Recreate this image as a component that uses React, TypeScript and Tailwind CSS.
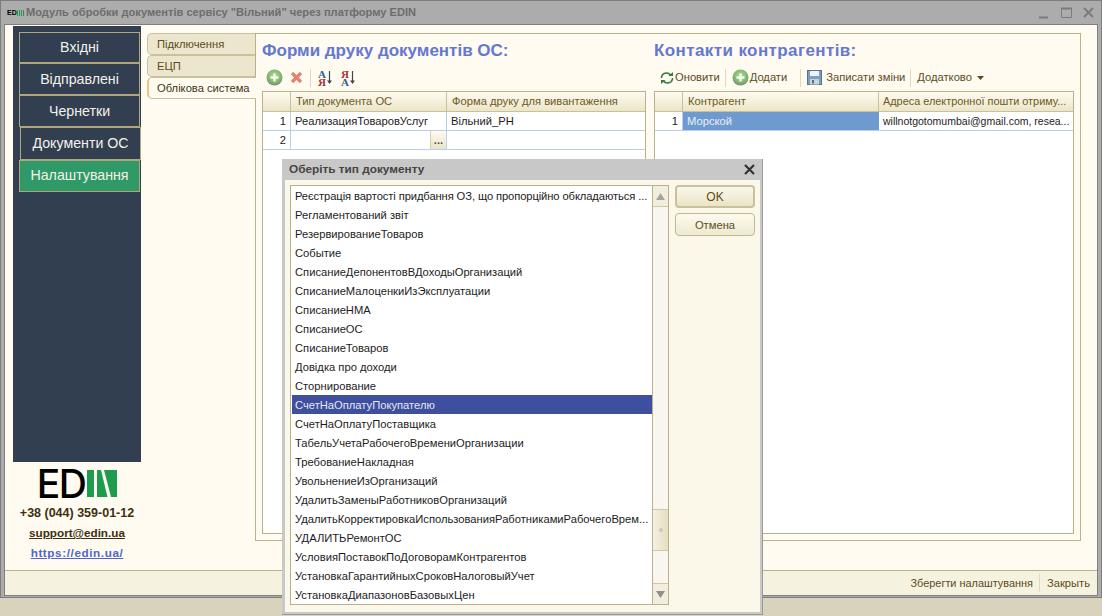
import React from 'react'

const menu = [
  { label: 'Вхідні', cls: 'bg-[#323f50] h-[31px] ml-[6px] w-[121px]' },
  { label: 'Відправлені', cls: 'bg-[#323f50] h-[32px] pt-px ml-[6px] w-[121px]' },
  { label: 'Чернетки', cls: 'bg-[#323f50] h-[32px] pt-px ml-[6px] w-[121px]' },
  { label: 'Документи ОС', cls: 'bg-[#323f50] h-[33px] ml-[7px] w-[121px]' },
  { label: 'Налаштування', cls: 'bg-[#2f9967] h-[32px] ml-[6px] w-[121px]' },
]

const docs = [
  'Реєстрація вартості придбання ОЗ, що пропорційно обкладаються ...',
  'Регламентований звіт',
  'РезервированиеТоваров',
  'Событие',
  'СписаниеДепонентовВДоходыОрганизаций',
  'СписаниеМалоценкиИзЭксплуатации',
  'СписаниеНМА',
  'СписаниеОС',
  'СписаниеТоваров',
  'Довідка про доходи',
  'Сторнирование',
  'СчетНаОплатуПокупателю',
  'СчетНаОплатуПоставщика',
  'ТабельУчетаРабочегоВремениОрганизации',
  'ТребованиеНакладная',
  'УвольнениеИзОрганизаций',
  'УдалитьЗаменыРаботниковОрганизаций',
  'УдалитьКорректировкаИспользованияРаботникамиРабочегоВрем...',
  'УДАЛИТЬРемонтОС',
  'УсловияПоставокПоДоговорамКонтрагентов',
  'УстановкаГарантийныхСроковНалоговыйУчет',
  'УстановкаДиапазоновБазовыхЦен',
]

const PlusIcon = ({ id }: { id: string }) => (
  <svg width="17" height="17" viewBox="0 0 17 17" className="shrink-0">
    <defs>
      <radialGradient id={id} cx="50%" cy="40%" r="60%">
        <stop offset="0%" stopColor="#b5dc9c" />
        <stop offset="70%" stopColor="#7fb56c" />
        <stop offset="100%" stopColor="#7d8a76" />
      </radialGradient>
    </defs>
    <circle cx="8.5" cy="8.5" r="8" fill={`url(#${id})`} />
    <path d="M8.5 4.5v8M4.5 8.5h8" stroke="#f4fbef" strokeWidth="2.4" />
  </svg>
)

const RedCross = () => (
  <svg width="13" height="13" viewBox="0 0 13 13" className="shrink-0">
    <path d="M2 2l9 9M11 2l-9 9" stroke="#e9806f" strokeWidth="3.2" />
  </svg>
)

const SortIcon = ({ desc }: { desc?: boolean }) => (
  <span className="flex items-center shrink-0 w-[16px]">
    <span className="flex flex-col items-center font-['Liberation_Serif',serif] font-bold text-[11px] leading-[8px]">
      <span className={desc ? 'text-[#a83232]' : 'text-[#2f5f96]'}>{desc ? 'Я' : 'А'}</span>
      <span className={desc ? 'text-[#2f5f96]' : 'text-[#a83232]'}>{desc ? 'А' : 'Я'}</span>
    </span>
    <svg width="7" height="15" viewBox="0 0 7 15">
      <path d="M3.5 1v11" stroke="#3c4650" strokeWidth="1.2" />
      <path d="M1 10.5h5L3.5 14z" fill="#3c4650" />
    </svg>
  </span>
)

const RefreshIcon = () => (
  <svg width="16" height="14" viewBox="0 0 16 14" fill="none" className="shrink-0">
    <path d="M2.5 7a5 5 0 0 1 9-3" stroke="#2f7d3a" strokeWidth="1.5" />
    <path d="M9.5 5h4.5V1z" fill="#2f7d3a" />
    <path d="M13.5 7a5 5 0 0 1-9 3" stroke="#2f7d3a" strokeWidth="1.5" />
    <path d="M6.5 9H2v4z" fill="#2f7d3a" />
  </svg>
)

const SaveIcon = () => (
  <svg width="15" height="15" viewBox="0 0 15 15" className="shrink-0">
    <rect x="0.5" y="0.5" width="14" height="14" fill="#7b9ec4" stroke="#5b7184" />
    <rect x="3" y="1" width="9" height="5" fill="#eef3f8" />
    <rect x="3" y="9" width="9" height="5.5" fill="#c8d3dc" />
    <rect x="5" y="10" width="2" height="3.5" fill="#5b7184" />
  </svg>
)

const Sep = () => <span className="block w-px h-[18px] bg-[#e0dabc] shrink-0" />

const headCell = 'h-full flex items-center px-[5px] truncate border-r border-[#c9c19c] last:border-r-0 text-[#6b5a24]'
const rowCell = 'h-full flex items-center pt-px truncate border-r border-[#b9d0ea] last:border-r-0'

const Tab = ({ label, active }: { label: string; active?: boolean }) => (
  <div
    className={
      active
        ? "relative z-10 h-[22px] -mr-px flex items-center pl-[8px] bg-[#fffbf0] border-l-2 border-y border-l-[#e6c77c] border-y-[#c9c19c] rounded-l-[5px] text-[#3e3414]"
        : "h-[22px] flex items-center pl-[9px] bg-[#ebe6cd] border-l border-y border-[#c9c19c] rounded-l-[5px] text-[#5c4c1c]"
    }
  >
    {label}
  </div>
)

export default function App() {
  return (
    <div className="relative w-[1102px] h-[616px] overflow-hidden bg-[#d8d3bd] font-['Liberation_Sans',sans-serif] text-[11.2px]">
      {/* main window */}
      <div className="w-full h-[598px] flex flex-col border border-[#7d7d7d] bg-[#acacac] px-[3px] pb-px">
        <div className="h-[23px] shrink-0 flex items-center pl-[1px]">
          <span className="w-[21px] flex items-center shrink-0 pl-[2px]">
            <span className="text-[7px] font-bold leading-none text-black">ED</span>
            <svg width="7" height="6" viewBox="0 0 7 6">
              <path d="M.5 0v6M2.5 0v6M4.5 0v6M6.5 0v6" stroke="#1f9b4e" strokeWidth="1" />
            </svg>
          </span>
          <span className="text-[#6d6d6d] font-bold text-[11.1px]">
            Модуль обробки документів сервісу "Вільний" через платформу EDIN
          </span>
          <span className="ml-auto flex items-center gap-[11px] pr-[4px]">
            <svg width="12" height="12" viewBox="0 0 12 12"><path d="M1 10.5h9" stroke="#7b7b7b" strokeWidth="2" /></svg>
            <svg width="11" height="11" viewBox="0 0 11 11" fill="none"><path d="M.5 1.5h10v9H.5z" stroke="#7b7b7b" /><path d="M0 1.5h11" stroke="#7b7b7b" strokeWidth="2" /></svg>
            <svg width="11" height="11" viewBox="0 0 11 11"><path d="M1 1l9 9M10 1l-9 9" stroke="#7b7b7b" strokeWidth="2" /></svg>
          </span>
        </div>

        <div className="flex-1 min-h-0 flex flex-col border border-[#7f7f7f] bg-[#fffbf0]">
          <div className="flex-1 min-h-0 flex">
            {/* sidebar column */}
            <div className="w-[128px] ml-[8px] mt-px shrink-0 flex flex-col items-center">
              <div className="w-full h-[436px] bg-[#323f50] pt-[6px] flex flex-col">
                {menu.map(m => (
                  <div
                    key={m.label}
                    className={`${m.cls} shrink-0 flex items-center justify-center border border-[#b0a77f] text-[#f2f2ea] text-[14.2px]`}
                  >
                    {m.label}
                  </div>
                ))}
              </div>
              <div className="mt-[7px] h-[28px] flex items-center">
                <span className="font-['Inter',sans-serif] text-[39px] font-medium leading-none text-black tracking-[-1.5px]">ED</span>
                <svg width="30" height="27" viewBox="0 0 30 27" className="ml-[2px]">
                  <rect x="0" y="0" width="7" height="27" fill="#1f9b4e" />
                  <rect x="10" y="0" width="20" height="27" fill="#1f9b4e" />
                  <path d="M14 0h3l7 27h-3.5z" fill="#fffbf0" />
                </svg>
              </div>
              <div className="mt-[8px] font-bold text-[12.5px] leading-[16px] text-[#3e2f10]">+38 (044) 359-01-12</div>
              <div className="mt-[4px] font-bold text-[11.7px] leading-[16px] text-[#3e2f10] underline">support@edin.ua</div>
              <div className="mt-[4px] font-bold text-[11.7px] tracking-[0.6px] leading-[16px] text-[#5067c8] underline">https://edin.ua/</div>
            </div>

            {/* tabs */}
            <div className="w-[108px] ml-[6px] mt-[8px] shrink-0 flex flex-col">
              <Tab label="Підключення" />
              <Tab label="ЕЦП" />
              <Tab label="Облікова система" active />
            </div>

            {/* panel */}
            <div className="w-[826px] h-[508px] mt-[8px] shrink-0 border border-[#b9b18a] flex gap-[8px] px-[6px] pb-[6px]">
              <div className="w-[384px] shrink-0 flex flex-col">
                <div className="h-[26px] mt-[4px] flex items-center text-[#6478d0] text-[17px] font-bold">Форми друку документів ОС:</div>
                <div className="h-[27px] flex items-center gap-[7px] pl-[4px]">
                  <PlusIcon id="pa" />
                  <RedCross />
                  <Sep />
                  <SortIcon />
                  <SortIcon desc />
                </div>
                <div className="flex-1 min-h-0 border border-[#b9b18a] bg-white flex flex-col">
                  <div className="h-[20px] shrink-0 flex bg-gradient-to-b from-[#fffbf0] to-[#ebe5c8] border-b border-[#c9c19c]">
                    <div className={`${headCell} w-[28px]`} />
                    <div className={`${headCell} w-[156px]`}>Тип документа ОС</div>
                    <div className={`${headCell} flex-1`}>Форма друку для вивантаження</div>
                  </div>
                  <div className="h-[19px] shrink-0 flex border-b border-[#b9d0ea] text-[#1c1c1c]">
                    <div className={`${rowCell} w-[28px] justify-end pr-[4px]`}>1</div>
                    <div className={`${rowCell} w-[156px] px-[4px]`}>РеализацияТоваровУслуг</div>
                    <div className={`${rowCell} flex-1 px-[4px]`}>Вільний_РН</div>
                  </div>
                  <div className="h-[19px] shrink-0 flex border-b border-[#b9d0ea] text-[#1c1c1c]">
                    <div className={`${rowCell} w-[28px] justify-end pr-[4px]`}>2</div>
                    <div className="h-full w-[156px] flex items-center justify-end border-r border-[#b9d0ea]">
                      <span className="w-[16px] h-full flex items-end justify-center pb-[3px] leading-none font-bold text-[#555] bg-gradient-to-b from-[#fffbf0] to-[#e9e3c6] border-l border-[#d5cfae]">...</span>
                    </div>
                    <div className={`${rowCell} flex-1`} />
                  </div>
                </div>
              </div>

              <div className="w-[420px] shrink-0 flex flex-col">
                <div className="h-[26px] mt-[4px] flex items-center text-[#6478d0] text-[17px] font-bold tracking-[0.4px]">Контакти контрагентів:</div>
                <div className="h-[27px] flex items-center pl-[5px] text-[#5c4c1c]">
                  <RefreshIcon />
                  <span>Оновити</span>
                  <span className="ml-[5px]"><Sep /></span>
                  <span className="ml-[6px]"><PlusIcon id="pb" /></span>
                  <span className="ml-px"><span className="underline">Д</span>одати</span>
                  <span className="ml-[13px]"><Sep /></span>
                  <span className="ml-[6px]"><SaveIcon /></span>
                  <span className="ml-[4px]">Записати зміни</span>
                  <span className="ml-[5px]"><Sep /></span>
                  <span className="ml-[6px]">Додатково</span>
                  <svg width="7" height="4" viewBox="0 0 7 4" className="ml-[5px]"><path d="M0 0h7L3.5 4z" fill="#5c4c1c" /></svg>
                </div>
                <div className="flex-1 min-h-0 border border-[#b9b18a] bg-white flex flex-col">
                  <div className="h-[20px] shrink-0 flex bg-gradient-to-b from-[#fffbf0] to-[#ebe5c8] border-b border-[#c9c19c]">
                    <div className={`${headCell} w-[28px]`} />
                    <div className={`${headCell} w-[196px]`}>Контрагент</div>
                    <div className="h-full flex-1 min-w-0 flex items-center pl-[4px] text-[10.9px] whitespace-nowrap text-[#6b5a24]">Адреса електронної пошти отриму...</div>
                  </div>
                  <div className="h-[19px] shrink-0 flex border-b border-[#b9d0ea] text-[#1c1c1c]">
                    <div className={`${rowCell} w-[28px] justify-end pr-[4px]`}>1</div>
                    <div className="h-full w-[196px] flex items-center pt-px px-[4px] bg-[#6f9ad0] text-[#e8eff8]">Морской</div>
                    <div className="h-full flex-1 min-w-0 flex items-center pt-px pl-[4px] text-[10.5px] whitespace-nowrap">willnotgotomumbai@gmail.com, resea...</div>
                  </div>
                </div>
              </div>
            </div>
          </div>

          {/* footer */}
          <div className="h-[25px] shrink-0 flex items-center justify-end border-t border-[#b9b18a] bg-[#f5f2e0] pr-[7px] text-[#5c4c1c]">
            <span className="text-[10.9px]">Зберегти налаштування</span>
            <span className="w-px h-[18px] bg-[#e0dabc] mx-[6px]" />
            <span className="ml-[1px]">Закрыть</span>
          </div>
        </div>
      </div>

      {/* modal dialog */}
      <div className="absolute left-[282px] top-[159px] w-[481px] h-[456px] flex flex-col bg-[#c8c8c8] border-r border-b border-[#9a9a9a] pl-[3px] pr-[2px] pb-[2px]">
        <div className="h-[21px] shrink-0 flex items-center justify-between pl-[4px] pr-[5px] font-bold text-[11.8px] text-[#444]">
          <span>Оберіть тип документу</span>
          <svg width="11" height="11" viewBox="0 0 11 11"><path d="M1 1l9 9M10 1l-9 9" stroke="#333" strokeWidth="2.2" /></svg>
        </div>
        <div className="flex-1 min-h-0 flex bg-[#fbf8ea] pt-[5px] pl-[5px] pr-[5px] pb-[8px] gap-[6px]">
          <div className="w-[379px] h-[420px] shrink-0 flex border border-[#b9b18a] bg-white">
            <div className="flex-1 min-w-0 pl-px">
              {docs.map((d, i) => (
                <div
                  key={d}
                  className={
                    d === 'СчетНаОплатуПокупателю'
                      ? 'h-[19px] pl-[3px] pt-px flex items-center bg-[#3d4f9e] text-[#e8e8f0]'
                      : i === 0
                        ? 'h-[19px] pl-[3px] pt-px flex items-center whitespace-nowrap tracking-[-0.1px] text-[#1c1c1c]'
                        : 'h-[19px] pl-[3px] pt-px flex items-center whitespace-nowrap text-[#1c1c1c]'
                  }
                >
                  {d}
                </div>
              ))}
            </div>
            {/* scrollbar */}
            <div className="w-[16px] shrink-0 flex flex-col border-l border-[#b9b18a] bg-[#f8f6ee]">
              <div className="h-[21px] shrink-0 flex items-center justify-center border-b border-[#cfc8a6] bg-[#f1eedd]">
                <svg width="9" height="7" viewBox="0 0 9 7"><path d="M4.5 0L9 7H0z" fill="#a5a5a0" /></svg>
              </div>
              <div className="flex-1" />
              <div className="h-[42px] shrink-0 flex items-center justify-center border-y border-[#cfc8a6] bg-gradient-to-r from-[#f5f2e2] to-[#e3ddbf]">
                <span className="w-[4px] h-[4px] rounded-full bg-[#c9c9c0]" />
              </div>
              <div className="h-[32px] shrink-0" />
              <div className="h-[21px] shrink-0 flex items-center justify-center border-t border-[#cfc8a6] bg-[#f1eedd]">
                <svg width="9" height="7" viewBox="0 0 9 7"><path d="M0 0h9L4.5 7z" fill="#8f8f8a" /></svg>
              </div>
            </div>
          </div>
          <div className="w-[80px] shrink-0 flex flex-col gap-[5px] text-[#5c4c1c]">
            <div className="h-[23px] flex items-center justify-center rounded-[4px] border-2 border-[#c9c19c] bg-gradient-to-b from-[#fbf8ea] to-[#eae4c6] text-[12px]">OK</div>
            <div className="h-[23px] pt-px flex items-center justify-center rounded-[4px] border border-[#c0b88f] bg-gradient-to-b from-[#fdfbf0] to-[#eee9cf]">Отмена</div>
          </div>
        </div>
      </div>
    </div>
  )
}
